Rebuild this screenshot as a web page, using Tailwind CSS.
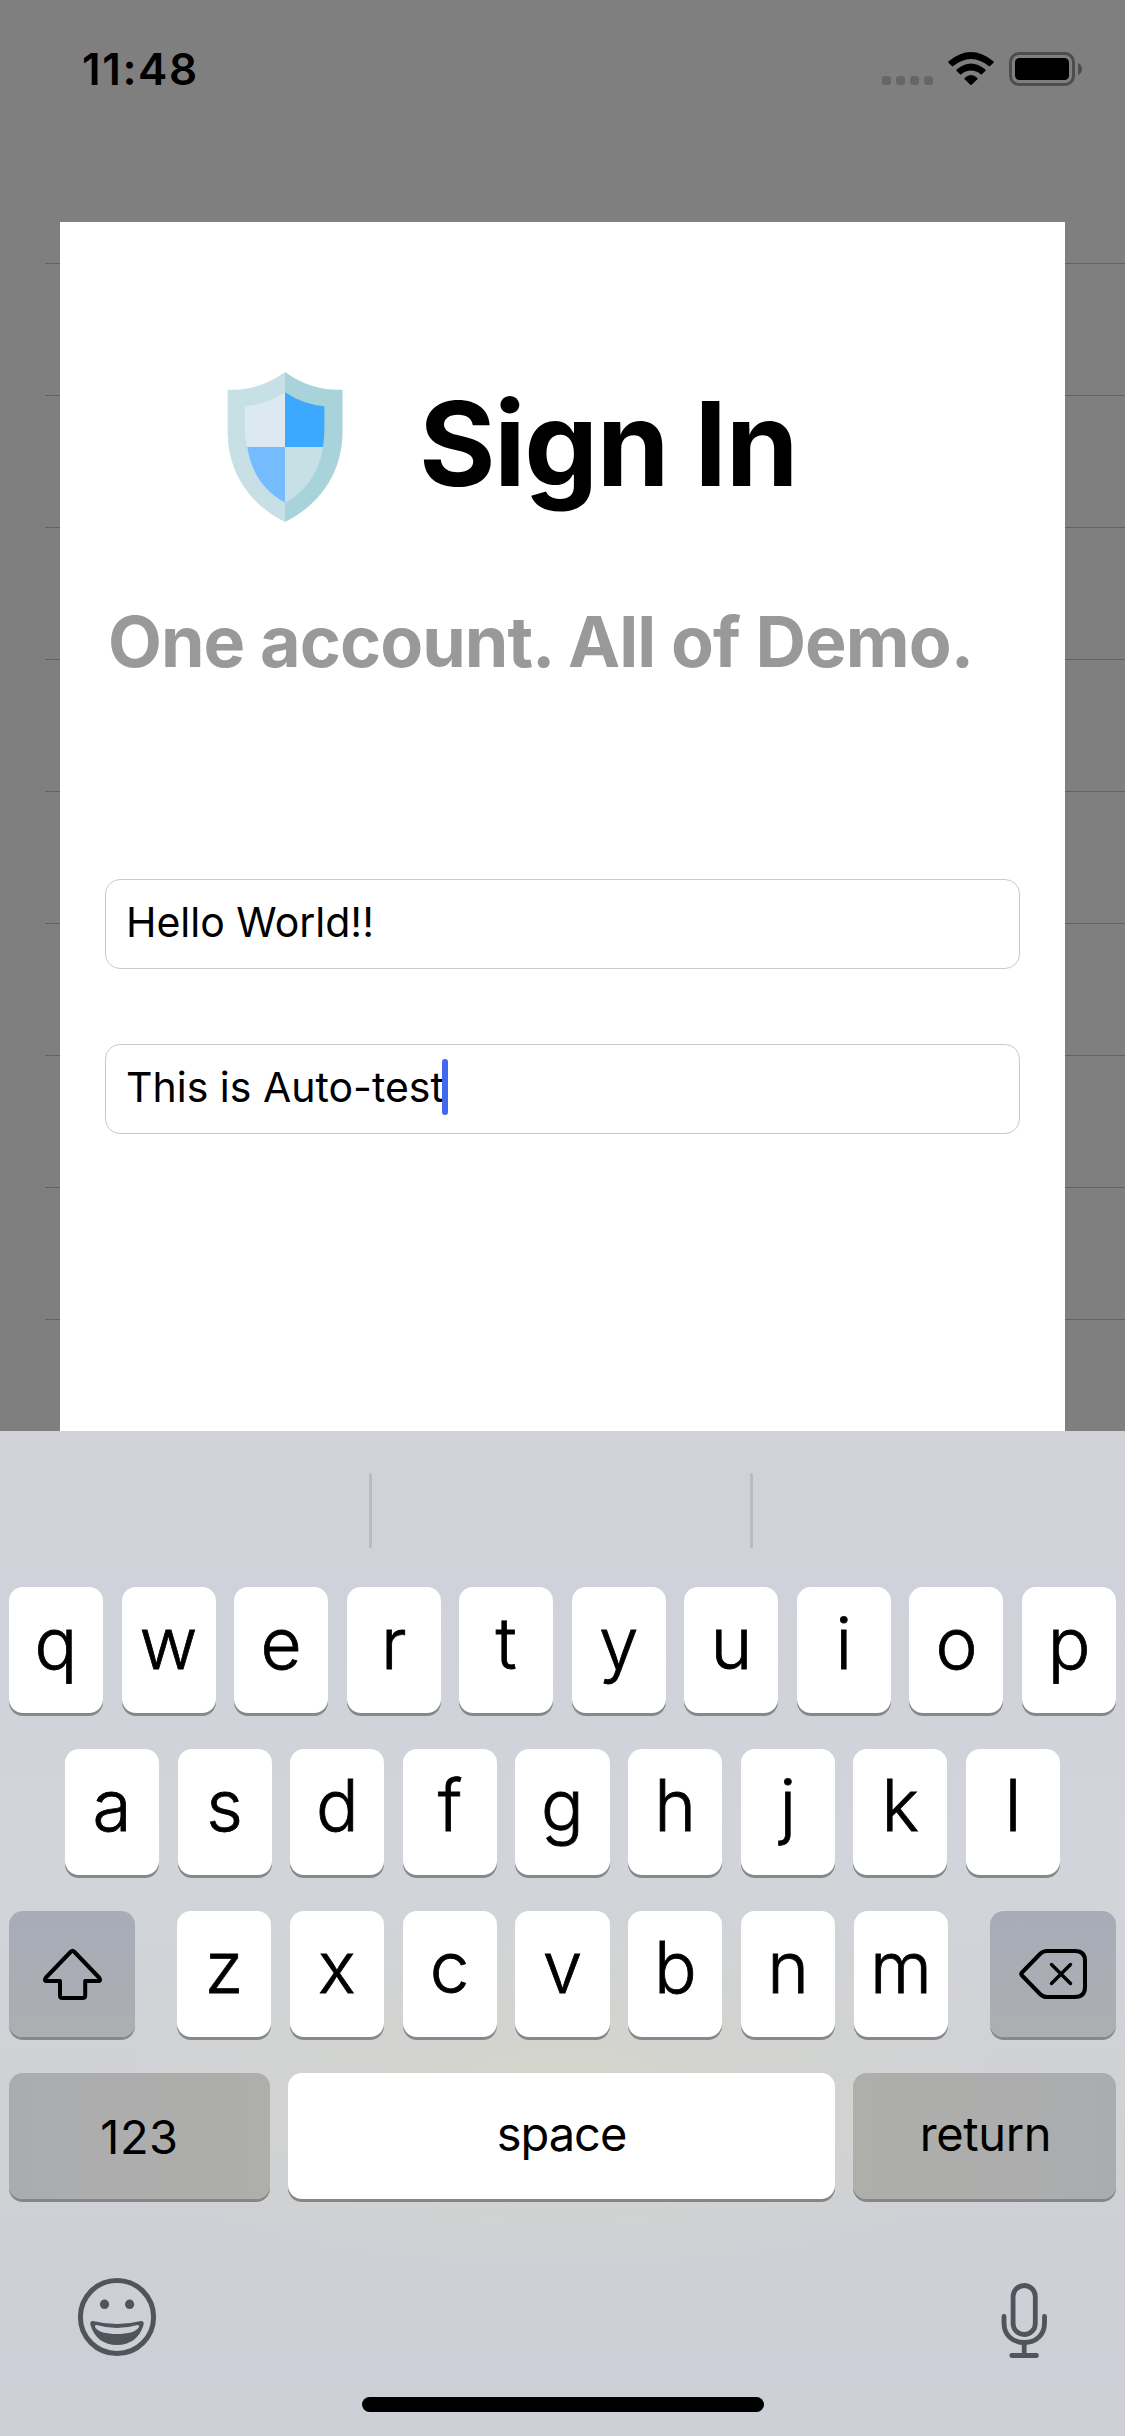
<!DOCTYPE html>
<html lang="en">
<head>
<meta charset="utf-8">
<title>Sign In</title>
<script src="https://cdn.jsdelivr.net/npm/@tailwindcss/browser@4"></script>
</head>
<body class="w-[1125px] h-[2436px] overflow-hidden font-['Inter',sans-serif] text-black bg-[#7f7f7f] flex flex-col">

<main class="h-[1431px] grid shrink-0">
  <!-- Dimmed list behind the dialog -->
  <div class="[grid-area:1/1] pt-[132px] pl-[45px] flex flex-col">
    <div class="h-[132px] border-b border-[#636364]"></div>
    <div class="h-[132px] border-b border-[#636364]"></div>
    <div class="h-[132px] border-b border-[#636364]"></div>
    <div class="h-[132px] border-b border-[#636364]"></div>
    <div class="h-[132px] border-b border-[#636364]"></div>
    <div class="h-[132px] border-b border-[#636364]"></div>
    <div class="h-[132px] border-b border-[#636364]"></div>
    <div class="h-[132px] border-b border-[#636364]"></div>
    <div class="h-[132px] border-b border-[#636364]"></div>
  </div>

  <div class="[grid-area:1/1] flex flex-col">
    <!-- Status bar -->
    <header class="h-[222px] pt-[39px] pl-[82px] pr-[42px] flex justify-between items-start">
      <div class="text-[44px] leading-[60px] font-semibold tracking-[1.600px]">11:48</div>
      <div class="flex items-start pt-[12px]">
        <div class="flex gap-[5px] pt-[25px]">
          <span class="size-[9px] rounded-[3px] bg-[#666]"></span>
          <span class="size-[9px] rounded-[3px] bg-[#666]"></span>
          <span class="size-[9px] rounded-[3px] bg-[#666]"></span>
          <span class="size-[9px] rounded-[3px] bg-[#666]"></span>
        </div>
        <svg class="ml-[14px]" width="48" height="36" viewBox="947 51 48 36">
          <path d="M948.3 61.5Q971 42.5 993.7 61.5Q994 62.300 993.300 63L989.500 66.500Q971 51.500 952.500 66.500L948.700 63Q948 62.300 948.300 61.500Z"/>
          <path d="M956.600 69.600Q971 57.200 985.400 69.600Q985.900 70.300 985.300 71L981.400 74.700Q971 66.300 960.600 74.700L956.700 71Q956.100 70.300 956.600 69.600Z"/>
          <path d="M964.600 78Q971 72.200 977.400 78Q977.900 78.500 977.300 79.200L971.700 84.700Q971 85.300 970.300 84.700L964.700 79.200Q964.100 78.500 964.600 78Z"/>
        </svg>
        <svg class="ml-[13px]" width="75" height="36" viewBox="1008 51 75 36">
          <rect x="1010.500" y="53.500" width="63" height="31" rx="8.500" fill="none" stroke="#4d4d4d" stroke-width="3"/>
          <rect x="1015" y="58" width="54" height="22" rx="4.500"/>
          <path d="M1078 63Q1082 65 1082 69T1078 75Z" fill="#4d4d4d"/>
        </svg>
      </div>
    </header>

    <!-- Sign-in dialog -->
    <section class="mx-[60px] grow bg-white px-[45px] flex flex-col">
      <div class="mt-[148px] h-[154px] flex pl-[121px]">
        <svg width="118" height="154" viewBox="226 370 118 154">
          <path d="M285 372Q259 391 227.600 389.700V433C228 470 247 503 285 522Z" fill="#c6e0e5"/>
          <path d="M285 372Q311 391 342.500 389.700V433C342 470 323 503 285 522Z" fill="#a9d3da"/>
          <path d="M285 392.300Q268 404 244.800 406.300V430Q245 439 247.300 447H285Z" fill="#dde9f0"/>
          <path d="M285 392.300Q302 404 324.400 406.300V430Q324.400 439 323 447H285Z" fill="#3ca9ff"/>
          <path d="M247.300 447C251 473 265 492 285 502.500V447Z" fill="#74bbff"/>
          <path d="M323 447C319 473 305 492 285 502.500V447Z" fill="#c6e0e5"/>
        </svg>
        <h1 class="ml-[75px] -mt-[6px] text-[117px] leading-[160px] font-bold tracking-[-1.500px] whitespace-nowrap">Sign In</h1>
      </div>
      <h2 class="mt-[78px] pl-[3px] text-[70px] leading-[80px] font-bold tracking-[-0.950px] text-[#999] whitespace-nowrap">One account. All of Demo.</h2>
      <div class="mt-[197px] h-[90px] border border-[#c9c9c9] rounded-[15px] pl-[20px] pb-[2px] flex items-center text-[41px] whitespace-nowrap">Hello World!!</div>
      <div class="mt-[75px] h-[90px] border border-[#c9c9c9] rounded-[15px] pl-[20px] flex items-center text-[41px] whitespace-nowrap">
        <span class="w-[316px] pb-[2px] shrink-0">This is Auto-test</span>
        <span class="w-[6px] h-[56px] rounded-full bg-[#4169f0] mb-[4px]"></span>
      </div>
    </section>
  </div>
</main>

<!-- Keyboard -->
<section class="h-[1005px] shrink-0 flex flex-col bg-[radial-gradient(ellipse_470px_190px_at_562px_660px,#d5d5cc_0%,#d3d4d0aa_55%,#d0d2d600_100%),linear-gradient(#d0d2d7,#cfd2da_15%,#d1d4d9_45%,#cfd1d4_70%,#cccfd7_93%,#cdd0d5)]">
  <div class="h-[156px] pt-[42px] pl-[369px] flex gap-[378px]">
    <span class="w-[3px] h-[75px] rounded-full bg-[#b9bbbf]"></span>
    <span class="w-[3px] h-[75px] rounded-full bg-[#b9bbbf]"></span>
  </div>

  <div class="px-[9px] grid grid-cols-10 gap-[18.600px] text-[71px] font-light [-webkit-text-stroke:0.8px_#000] *:h-[126px] *:pb-[13px] *:flex *:items-center *:justify-center *:rounded-[14px] *:bg-white *:shadow-[0_3px_0_#87888b]">
    <div>q</div><div>w</div><div>e</div><div>r</div><div>t</div><div>y</div><div>u</div><div>i</div><div>o</div><div>p</div>
  </div>

  <div class="mt-9 px-[65px] grid grid-cols-9 gap-[18.600px] text-[71px] font-light [-webkit-text-stroke:0.8px_#000] *:h-[126px] *:pb-[13px] *:flex *:items-center *:justify-center *:rounded-[14px] *:bg-white *:shadow-[0_3px_0_#87888b]">
    <div>a</div><div>s</div><div>d</div><div>f</div><div>g</div><div>h</div><div>j</div><div>k</div><div>l</div>
  </div>

  <div class="mt-9 px-[9px] flex justify-between">
    <div class="w-[126px] h-[126px] rounded-[14px] bg-linear-to-b from-[#a7acb8] to-[#adaeb1] shadow-[0_3px_0_#87888b] flex items-center justify-center">
      <svg width="126" height="126" viewBox="9 1911 126 126" fill="none" stroke="#000" stroke-width="4" stroke-linejoin="round">
        <path d="M71 1951.500Q72.500 1949.800 74 1951.500L99 1977.500Q101.500 1981 98 1981H85.200V1995.500Q85.200 1998 82.500 1998H62.500Q60 1998 60 1995.500V1981H47Q43.500 1981 46 1977.500Z"/>
      </svg>
    </div>
    <div class="w-[771px] grid grid-cols-7 gap-[18.600px] text-[71px] font-light [-webkit-text-stroke:0.8px_#000] *:h-[126px] *:pb-[13px] *:flex *:items-center *:justify-center *:rounded-[14px] *:bg-white *:shadow-[0_3px_0_#87888b]">
      <div>z</div><div>x</div><div>c</div><div>v</div><div>b</div><div>n</div><div>m</div>
    </div>
    <div class="w-[126px] h-[126px] rounded-[14px] bg-linear-to-b from-[#a7acb8] to-[#adaeb1] shadow-[0_3px_0_#87888b]">
      <svg width="126" height="126" viewBox="990 1911 126 126" fill="none" stroke="#000" stroke-width="4" stroke-linejoin="round" stroke-linecap="round">
        <path d="M1022 1972.500Q1020.500 1974 1022 1975.500L1040 1994Q1043 1997 1047 1997H1075Q1085 1997 1085 1987V1961Q1085 1951 1075 1951H1047Q1043 1951 1040 1954Z"/>
        <path stroke-width="3.400" d="M1051.500 1964.500L1070.500 1983.500M1070.500 1964.500L1051.500 1983.500"/>
      </svg>
    </div>
  </div>

  <div class="mt-9 px-[9px] flex gap-[18px] text-[47px] *:h-[126px] *:flex *:items-center *:justify-center *:rounded-[14px] *:shadow-[0_3px_0_#858686]">
    <div class="w-[261px] pt-[2px] tracking-[0.500px] bg-linear-to-r from-[#abacae] to-[#aeafaa]">123</div>
    <div class="w-[547px] pb-1 tracking-[-1px] bg-white">space</div>
    <div class="w-[263px] pb-1 pl-[2px] tracking-[-0.400px] bg-linear-to-r from-[#aeafaa] to-[#abacae]">return</div>
  </div>

  <div class="pt-[76px] pl-[75px] pr-[74px] flex justify-between">
    <svg width="84" height="84" viewBox="75 2275 84 84" fill="#50555c">
      <circle cx="117" cy="2317" r="36.600" fill="none" stroke="#50555c" stroke-width="5"/>
      <ellipse cx="104.500" cy="2304.300" rx="4.600" ry="4.800"/>
      <ellipse cx="129.600" cy="2304.300" rx="4.600" ry="4.800"/>
      <path fill-rule="evenodd" d="M93 2321Q117 2327 141 2321Q144.500 2321 143.500 2325C140 2338 130 2345 117 2345S94 2338 90.500 2325Q89.500 2321 93 2321ZM96.500 2325Q94.500 2325 95 2327C98 2332 106 2334 117 2334S136 2332 139 2327Q139.500 2325 137.500 2325Q117 2331 96.500 2325Z"/>
    </svg>
    <svg width="54" height="84" viewBox="997.500 2275 54 84" fill="none" stroke="#50555c" stroke-width="4.800" stroke-linecap="round">
      <rect x="1013.600" y="2285.500" width="22.200" height="49" rx="11.100"/>
      <path d="M1004.500 2316.500V2323C1004.500 2335 1013 2342.500 1024.700 2342.500S1045 2335 1045 2323V2316.500M1024.700 2343V2355.300M1012.300 2355.500H1037"/>
    </svg>
  </div>

  <div class="mt-[38px] ml-[362px] w-[402px] h-[15px] shrink-0 rounded-full bg-black"></div>
</section>
</body>
</html>
